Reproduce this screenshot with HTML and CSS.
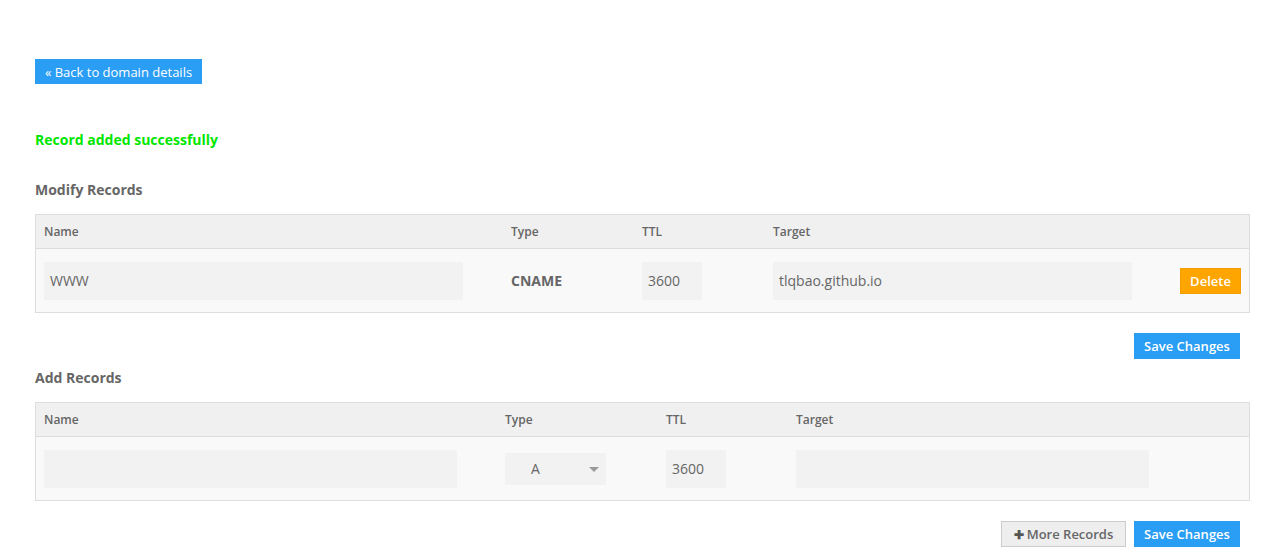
FILE: index.html
```html
<!DOCTYPE html>
<html>
<head>
<meta charset="utf-8">
<link rel="stylesheet" href="styles.css">
</head>
<body>
<div class="page">
  <div class="top"><a class="btn btn-back">« Back to domain details</a></div>
  <p class="success">Record added successfully</p>

  <h3 class="section-title">Modify Records</h3>
  <div class="records modify">
    <div class="row head">
      <div class="cell">Name</div>
      <div class="cell">Type</div>
      <div class="cell">TTL</div>
      <div class="cell">Target</div>
      <div class="cell"></div>
    </div>
    <div class="row body">
      <div class="cell"><div class="input name-in">WWW</div></div>
      <div class="cell"><span class="type-text">CNAME</span></div>
      <div class="cell"><div class="input ttl-in">3600</div></div>
      <div class="cell"><div class="input target-in">tlqbao.github.io</div></div>
      <div class="cell"><a class="btn btn-orange">Delete</a></div>
    </div>
  </div>
  <div class="actions first"><a class="btn btn-blue">Save Changes</a></div>

  <h3 class="section-title add-title">Add Records</h3>
  <div class="records add">
    <div class="row head">
      <div class="cell">Name</div>
      <div class="cell">Type</div>
      <div class="cell">TTL</div>
      <div class="cell">Target</div>
    </div>
    <div class="row body">
      <div class="cell"><div class="input name-in2"></div></div>
      <div class="cell"><div class="select">A<span class="caret"></span></div></div>
      <div class="cell"><div class="input ttl-in">3600</div></div>
      <div class="cell"><div class="input target-in2"></div></div>
    </div>
  </div>
  <div class="actions second">
    <a class="btn btn-grey"><span class="plus">✚</span>More Records</a>
    <a class="btn btn-blue">Save Changes</a>
  </div>
</div>
</body>
</html>
```

FILE: styles.css
```css
* { box-sizing: border-box; }
html, body { margin: 0; padding: 0; background: #fff; }
body { font-family: "Open Sans", "Liberation Sans", sans-serif; color: #666; }
.page { padding: 59px 35px 0 35px; width: 1285px; }
.top { height: 25px; }
.btn {
  display: inline-flex; align-items: center; justify-content: center;
  height: 26px; font-size: 13px; font-weight: 600; color: #fff;
  text-decoration: none; white-space: nowrap;
}
.btn-back { height: 25px; width: 167px; font-weight: 400; background: #2a9df4; }
.btn-blue { background: #2a9df4; width: 106px; }
.btn-orange { background: #ffa500; border: 1px solid #f29d00; width: 61px; }
.btn-grey { background: #eee; border: 1px solid #ccc; color: #666; width: 125px; }
.plus { font-size: 12px; margin-right: 3px; color: #555; }
.success { margin: 46px 0 0 0; color: #00e600; font-weight: 700; font-size: 14px; line-height: 20px; }
.section-title { margin: 30px 0 0 0; font-size: 14px; font-weight: 700; line-height: 20px; color: #666; }
.add-title { margin-top: 9px; }
.records { margin-top: 14px; border: 1px solid #ddd; width: 1215px; }
.row { display: grid; }
.modify .row { grid-template-columns: 467px 131px 131px 406px 1fr; }
.add .row { grid-template-columns: 461px 161px 130px 1fr; }
.head { background: #f0f0f0; height: 34px; border-bottom: 1px solid #ddd; align-items: center; }
.head .cell { font-size: 12px; font-weight: 600; padding-left: 8px; color: #666; }
.body { background: #f9f9f9; height: 63px; align-items: center; }
.body .cell { padding-left: 8px; display: flex; align-items: center; }
.input {
  height: 38px; background: #f2f2f2; font-size: 14px; color: #666;
  padding-left: 6px; display: flex; align-items: center;
}
.name-in { width: 419px; }
.ttl-in { width: 60px; }
.target-in { width: 359px; }
.name-in2 { width: 413px; }
.target-in2 { width: 353px; }
.type-text { font-size: 14px; font-weight: 700; color: #666; }
.modify .body .cell:last-child { padding-left: 9px; }
.select {
  width: 101px; height: 32px; background: #f2f2f2; font-size: 14px; color: #666;
  display: flex; align-items: center; padding-left: 26px; position: relative;
}
.caret {
  position: absolute; left: 84px; top: 14px; width: 0; height: 0;
  border-left: 5px solid transparent; border-right: 5px solid transparent; border-top: 5px solid #999;
}
.actions { display: flex; justify-content: flex-end; gap: 8px; width: 1205px; }
.actions.first { margin-top: 20px; }
.actions.second { margin-top: 20px; }
```
